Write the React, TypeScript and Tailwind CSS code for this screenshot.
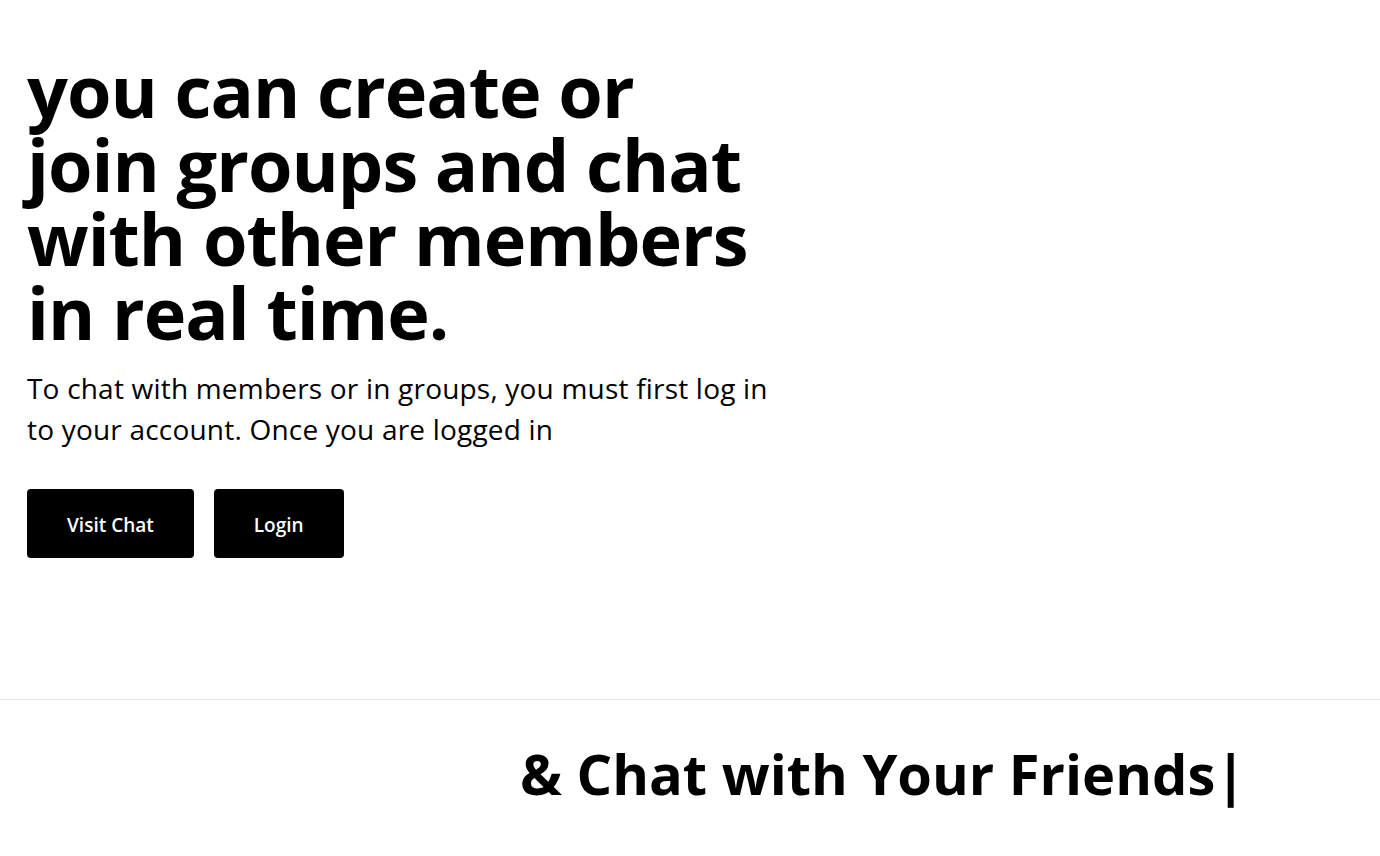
const heroLines = ["you can create or", "join groups and chat", "with other members", "in real time."];

function HeroButton({ label }: { label: string }) {
  return (
    <button className="h-[69px] rounded-[4px] bg-black px-[40px] pt-[4px] text-[19px] font-semibold text-white">
      {label}
    </button>
  );
}

export default function App() {
  return (
    <div className="min-h-screen bg-white font-['Open_Sans',sans-serif] text-black">
      <section className="h-[699px] px-[27px] pt-[53px]">
        <h1 className="text-[72px] font-bold leading-[74px] tracking-[-1px]">
          {heroLines.map((line) => (
            <span key={line} className="block">
              {line}
            </span>
          ))}
        </h1>
        <p className="mt-[19px] text-[28px] leading-[41px] tracking-[0.2px]">
          To chat with members or in groups, you must first log in
          <br />
          to your account. Once you are logged in
        </p>
        <div className="mt-[39px] flex gap-5">
          <HeroButton label="Visit Chat" />
          <HeroButton label="Login" />
        </div>
      </section>
      <div className="border-t border-[#e5e5e5]" />
      <section className="pt-[37px] pl-[520px]">
        <h2 className="text-[56px] font-bold leading-[72px]">
          &amp; Chat with Your Friends|
        </h2>
      </section>
    </div>
  );
}
